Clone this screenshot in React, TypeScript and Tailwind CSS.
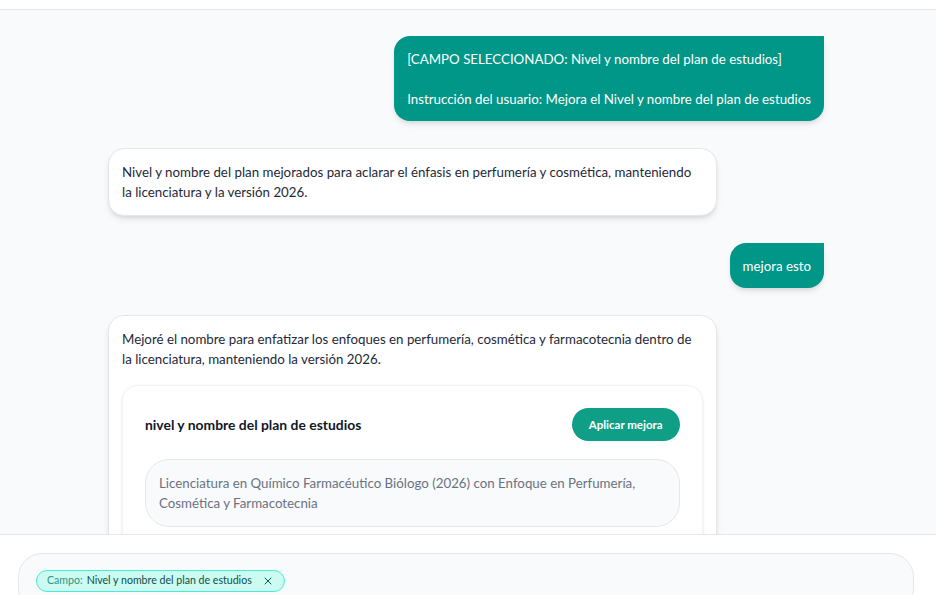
import { X } from "lucide-react";

const font = { fontFamily: "Lato, 'Noto Sans', sans-serif" };

function UserBubble({ text }: { text: string }) {
  return (
    <div className="flex justify-end">
      <div className="max-w-[85%] whitespace-pre-wrap rounded-2xl rounded-tr-none bg-[#009688] px-[13px] py-[12.5px] text-[13.3px] leading-5 text-white shadow-md">
        {text}
      </div>
    </div>
  );
}

export default function App() {
  return (
    <div className="flex h-[595px] w-[936px] flex-col overflow-hidden bg-white" style={font}>
      {/* header (mostly scrolled) */}
      <div className="h-[10px] shrink-0 border-b border-gray-200 bg-white" />

      {/* messages */}
      <div className="flex-1 overflow-hidden bg-[#f9fafc]">
        <div className="ml-[108px] flex w-[716px] flex-col gap-[27px] pt-[26px]">
          <UserBubble
            text={
              "[CAMPO SELECCIONADO: Nivel y nombre del plan de estudios]\n\nInstrucción del usuario: Mejora el Nivel y nombre del plan de estudios"
            }
          />

          <div className="flex justify-start">
            <div className="max-w-[85%] rounded-2xl border border-gray-200 bg-white px-[13px] py-[13px] text-[13.3px] leading-5 text-gray-800 shadow-md">
              Nivel y nombre del plan mejorados para aclarar el énfasis en perfumería y cosmética, manteniendo la licenciatura y la versión 2026.
            </div>
          </div>

          <UserBubble text="mejora esto" />

          <div className="flex justify-start">
            <div className="w-[85%] rounded-2xl border border-gray-200 bg-white px-[13px] pt-[13px] pb-4 text-[13.3px] leading-5 text-gray-800 shadow-md">
              <p>
                Mejoré el nombre para enfatizar los enfoques en perfumería, cosmética y farmacotecnia dentro de la licenciatura, manteniendo la versión 2026.
              </p>
              <div className="mt-[16px] rounded-2xl border border-gray-100 bg-white p-[22px] shadow-sm">
                <div className="flex items-center justify-between">
                  <h3 className="text-[13.9px] font-bold text-gray-900">nivel y nombre del plan de estudios</h3>
                  <button className="h-[33px] rounded-full bg-[#0e9f86] px-[17px] text-[11.5px] font-bold text-white">
                    Aplicar mejora
                  </button>
                </div>
                <div className="mt-[18px] rounded-3xl border border-gray-200 bg-gray-50 px-[13px] py-[13px] text-[13.3px] leading-5 text-gray-500">
                  Licenciatura en Químico Farmacéutico Biólogo (2026) con Enfoque en Perfumería, Cosmética y Farmacotecnia
                </div>
              </div>
            </div>
          </div>
        </div>
      </div>

      {/* composer */}
      <div className="h-[61px] shrink-0 border-t border-gray-200 bg-white pl-[18px] pr-[22px] pt-[18px]">
        <div className="h-[60px] rounded-3xl border border-gray-200 bg-gray-50 px-[17px] pt-[12px]">
          <span className="inline-flex h-[22px] items-center gap-1 rounded-full border border-teal-300 bg-teal-100 pl-[10px] pr-[10px] text-[10.6px]">
            <span className="text-teal-700/80">Campo:</span>
            <span className="text-teal-900">Nivel y nombre del plan de estudios</span>
            <X className="ml-[6px] h-3 w-3 text-teal-800" strokeWidth={2} />
          </span>
        </div>
      </div>
    </div>
  );
}
